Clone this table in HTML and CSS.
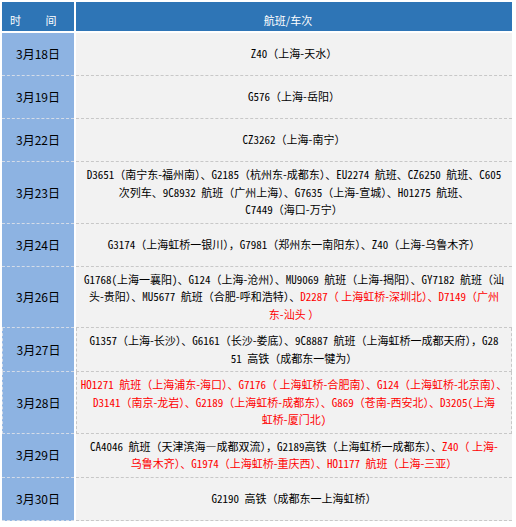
FILE: index.html
```html
<!DOCTYPE html>
<html lang="zh-CN">
<head>
<meta charset="utf-8">
<title>航班/车次</title>
<link rel="stylesheet" href="styles.css">
</head>
<body>
<div class="tbl">
  <div class="row head">
    <div class="c1">时　　间</div>
    <div class="c2">航班/车次</div>
  </div>
  <div class="row">
    <div class="c1">3月18日</div>
    <div class="c2"><div class="t"><span class="n">Z40</span>（上海-天水）</div></div>
  </div>
  <div class="row">
    <div class="c1">3月19日</div>
    <div class="c2"><div class="t"><span class="n">G576</span>（上海-岳阳）</div></div>
  </div>
  <div class="row">
    <div class="c1">3月22日</div>
    <div class="c2"><div class="t"><span class="n">CZ3262</span>（上海-南宁）</div></div>
  </div>
  <div class="row">
    <div class="c1">3月23日</div>
    <div class="c2"><div class="t"><span class="n">D3651</span>（南宁东-福州南）、<span class="n">G2185</span>（杭州东-成都东）、<span class="n">EU2274 </span>航班、<span class="n">CZ6250 </span>航班、<span class="n">C605</span><br>次列车、<span class="n">9C8932 </span>航班（广州上海）、<span class="n">G7635</span>（上海-宣城）、<span class="n">H01275 </span>航班、<br><span class="n">C7449</span>（海口-万宁）</div></div>
  </div>
  <div class="row">
    <div class="c1">3月24日</div>
    <div class="c2"><div class="t"><span class="n">G3174</span>（上海虹桥一银川），<span class="n">G7981</span>（郑州东一南阳东）、<span class="n">Z40</span>（上海-乌鲁木齐）</div></div>
  </div>
  <div class="row">
    <div class="c1">3月26日</div>
    <div class="c2"><div class="t"><span class="n">G1768(</span>上海一襄阳<span class="n">)</span>、<span class="n">G124</span>（上海-沧州）、<span class="n">MU9069 </span>航班（上海-揭阳）、<span class="n">GY7182 </span>航班（汕<br>头-贵阳）、<span class="n">MU5677 </span>航班（合肥-呼和浩特）、<span class="red"><span class="n">D2287</span>（ 上海虹桥-深圳北）、<span class="n">D7149</span>（广州<br>东-汕头 ）</span></div></div>
  </div>
  <div class="row boxed">
    <div class="c1">3月27日</div>
    <div class="c2"><div class="t"><span class="n">G1357</span>（上海-长沙）、<span class="n">G6161</span>（长沙-娄底）、<span class="n">9C8887 </span>航班（上海虹桥一成都天府），<span class="n">G28</span><br><span class="n">51 </span>高铁（成都东一犍为）</div></div>
  </div>
  <div class="row boxed">
    <div class="c1">3月28日</div>
    <div class="c2 red"><div class="t"><span class="n">HO1271 </span>航班（上海浦东-海口）、<span class="n">G7176</span>（ 上海虹桥-合肥南）、<span class="n">G124</span>（上海虹桥-北京南）、<br><span class="n">D3141</span>（南京-龙岩）、<span class="n">G2189</span>（上海虹桥-成都东）、<span class="n">G869</span>（苍南-西安北）、<span class="n">D3205(</span>上海<br>虹桥-厦门北<span class="n">)</span></div></div>
  </div>
  <div class="row">
    <div class="c1">3月29日</div>
    <div class="c2"><div class="t"><span class="n">CA4046 </span>航班（天津滨海—成都双流），<span class="n">G2189</span>高铁（上海虹桥一成都东）、<span class="red"><span class="n">Z40</span>（ 上海-<br>乌鲁木齐）、<span class="n">G1974</span>（上海虹桥-重庆西）、<span class="n">HO1177 </span>航班（上海-三亚）</span></div></div>
  </div>
  <div class="row">
    <div class="c1">3月30日</div>
    <div class="c2"><div class="t"><span class="n">G2190 </span>高铁（成都东一上海虹桥）</div></div>
  </div>
</div>
</body>
</html>
```

FILE: styles.css
```css
html, body {
  margin: 0;
  padding: 0;
  background: #ffffff;
}

body {
  font-family: "Noto Sans CJK SC", sans-serif;
  font-size: 11px;
  font-weight: 400;
  color: #000000;
}

.tbl {
  padding: 2px;
  width: 510px;
  display: flex;
  flex-direction: column;
}

.row {
  display: grid;
  grid-template-columns: 72px 436px;
  column-gap: 2px;
}

.c1,
.c2 {
  box-sizing: border-box;
  min-height: 43px;
  padding: 4px 3px;
  line-height: 17.5px;
  display: flex;
  align-items: center;
  justify-content: center;
  text-align: center;
  white-space: nowrap;
  border-bottom: 1px dashed #c8c8c8;
}

.c1 {
  background: #8db3e2;
  font-size: 12px;
  border-bottom-color: #d4dce8;
}

.c2 {
  background: #f2f2f2;
}

.t {
  text-align: center;
}

.n {
  font-feature-settings: "hwid" 1;
}

.head {
  margin-bottom: 2px;
}

.head .c1,
.head .c2 {
  min-height: 29px;
  height: 29px;
  padding: 0 0 2px;
  align-items: flex-end;
  background: #2e75b6;
  color: #ffffff;
  font-size: 11px;
  border-bottom: none;
}

.head .c1 {
  justify-content: flex-start;
  padding-left: 8px;
  letter-spacing: 0.8px;
}

.head .c2 {
  padding-right: 12px;
}

.boxed .c1 {
  border-left: 1px dashed #d4dce8;
}

.boxed .c2 {
  border-left: 1px dashed #c8c8c8;
  border-right: 1px dashed #c8c8c8;
}

.red {
  color: #ff0000;
}
```
